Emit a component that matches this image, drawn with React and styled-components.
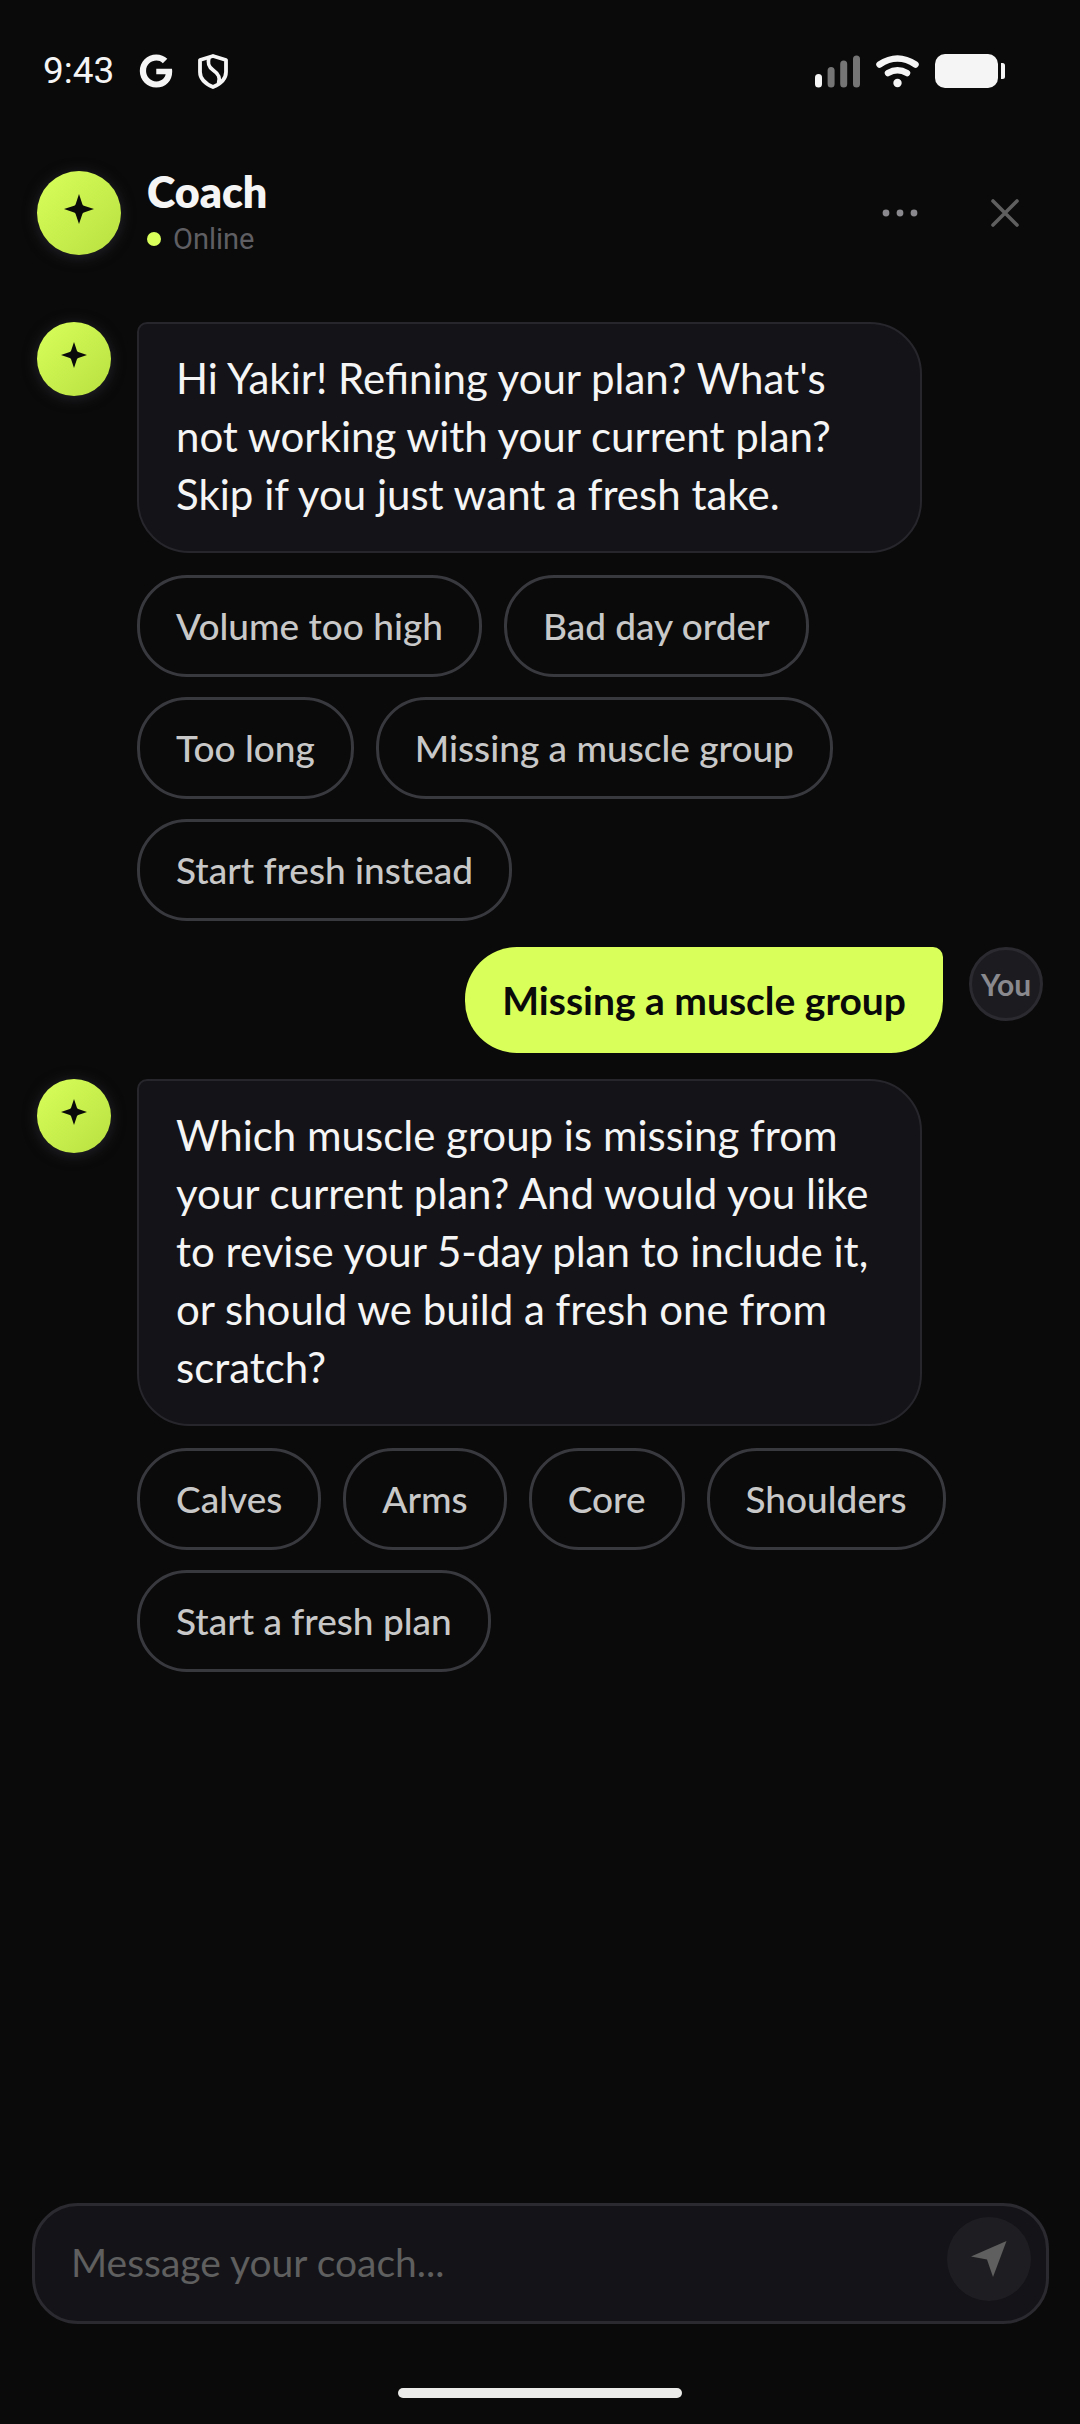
import React, { useState } from "react";
import styled, { createGlobalStyle } from "styled-components";
import { FaGoogle } from "react-icons/fa";

const GlobalStyle = createGlobalStyle`
  * {
    box-sizing: border-box;
  }
  body {
    margin: 0;
    background: #0a0a0a;
  }
  button, input {
    font-family: inherit;
  }
`;

const Screen = styled.div`
  display: flex;
  flex-direction: column;
  min-height: 100vh;
  background: #0a0a0a;
  color: #f5f5f5;
  font-family: Lato, "Noto Sans", sans-serif;
`;

const StatusBar = styled.div`
  display: flex;
  align-items: center;
  justify-content: space-between;
  height: 142px;
  padding: 0 75px 0 43px;
`;

const StatusGroup = styled.div`
  display: flex;
  align-items: center;
  gap: ${(props) => props.$gap}px;
`;

const Clock = styled.span`
  font-family: Roboto, sans-serif;
  font-size: 37px;
  line-height: 42px;
`;

const Header = styled.header`
  display: flex;
  align-items: center;
  gap: 26px;
  padding: 24px 33px 21px 37px;
`;

const Avatar = styled.div`
  display: flex;
  flex: none;
  align-items: center;
  justify-content: center;
  width: ${(props) => props.$size}px;
  height: ${(props) => props.$size}px;
  padding-bottom: 8px;
  border-radius: 50%;
  background: linear-gradient(135deg, #d8ff5a, #b8e040);
  box-shadow: 0 2px 14px #26262e;
`;

const UserAvatar = styled(Avatar)`
  padding: 0;
  border: 3px solid #2a2a30;
  background: #1c1c20;
  box-shadow: none;
  color: #8a8a8e;
  font-size: 30px;
  font-weight: 700;
`;

const Title = styled.div`
  flex: 1;
`;

const Name = styled.h1`
  margin: 0;
  font-size: 43px;
  font-weight: 800;
  line-height: 52px;
`;

const Presence = styled.div`
  display: flex;
  align-items: center;
  gap: 12px;
  color: #5f5f63;
  font-family: Roboto, sans-serif;
  font-size: 29px;
  line-height: 42px;
`;

const Dot = styled.span`
  width: 14px;
  height: 14px;
  border-radius: 50%;
  background: #d8ff5a;
`;

const Actions = styled.div`
  display: flex;
  gap: 21px;
`;

const IconButton = styled.button`
  display: flex;
  flex: none;
  align-items: center;
  justify-content: center;
  width: 84px;
  height: 84px;
  padding: 0;
  border: none;
  border-radius: 50%;
  background: ${(props) => props.$bg || "transparent"};
  color: ${(props) => props.$color || "#5f5f5f"};
`;

const Messages = styled.main`
  display: flex;
  flex: 1;
  flex-direction: column;
  gap: 26px;
  padding: 41px 37px;
`;

const Turn = styled.div`
  display: flex;
  flex-direction: column;
  gap: 22px;
`;

const Row = styled.div`
  display: flex;
  align-items: flex-start;
  justify-content: ${(props) => (props.$mine ? "flex-end" : "flex-start")};
  gap: 26px;
`;

const Bubble = styled.p`
  max-width: 78%;
  margin: 0;
  padding: 25px 37px 28px;
  border: 2px solid #26262c;
  border-radius: 10px 52px 52px 52px;
  background: #141418;
  font-size: 42px;
  line-height: 58px;
`;

const UserBubble = styled(Bubble)`
  padding: 24px 37px;
  border: none;
  border-radius: 52px 10px 52px 52px;
  background: #d8ff5a;
  color: #0a0a0a;
  font-size: 39px;
  font-weight: 700;
`;

const Chips = styled.div`
  display: flex;
  flex-wrap: wrap;
  gap: 20px 22px;
  padding: 0 70px 0 100px;
`;

const Chip = styled.button`
  height: 102px;
  padding: 0 36px 2px;
  border: 3px solid #38383f;
  border-radius: 50px;
  background: transparent;
  color: #c8c8c8;
  font-size: 37px;
  font-weight: 500;
`;

const Composer = styled.form`
  display: flex;
  align-items: flex-start;
  margin: 0 31px 0 32px;
  padding: 11px 15px 14px 36px;
  border: 3px solid #2a2a30;
  border-radius: 46px;
  background: #141418;
`;

const MessageInput = styled.input`
  flex: 1;
  min-width: 0;
  height: 90px;
  padding: 0;
  border: none;
  outline: none;
  background: transparent;
  color: #f5f5f5;
  font-size: 39px;
  &::placeholder {
    color: #5f5f5f;
    opacity: 1;
  }
`;

const HomeIndicator = styled.div`
  align-self: center;
  width: 284px;
  height: 10px;
  margin: 64px 0 26px;
  border-radius: 5px;
  background: #ebebe9;
`;

const ShieldIcon = () => (
  <svg width="30" height="35" viewBox="0 0 30 35" fill="none" stroke="#f5f5f5" strokeWidth="3.800" strokeLinejoin="round">
    <path d="M15 2 28 6v12c0 7-6 12-13 15C8 30 2 25 2 18V6z" />
    <path d="M11 3.500C9.500 9 10 12.500 15 16s8 7 5.500 13.500" />
  </svg>
);

const SignalIcon = () => (
  <svg width="45" height="34" viewBox="0 0 45 34">
    <rect x="0" y="20" width="7" height="13.500" rx="3.500" fill="#f5f5f5" />
    <rect x="12.600" y="13" width="7" height="20.500" rx="3.500" fill="#757575" />
    <rect x="25.200" y="6.500" width="7" height="27" rx="3.500" fill="#757575" />
    <rect x="38" y="1.500" width="7" height="32" rx="3.500" fill="#757575" />
  </svg>
);

const WifiIcon = () => (
  <svg width="43" height="34" viewBox="0 0 43 34" fill="none" stroke="#f5f5f5" strokeWidth="6.500" strokeLinecap="round">
    <path d="M3.500 10.500q18-12 36 0" />
    <path d="M12 19q9.500-5.500 19 0" />
    <circle cx="21.500" cy="29" r="4.200" fill="#f5f5f5" stroke="none" />
  </svg>
);

const BatteryIcon = () => (
  <svg width="70" height="34" viewBox="0 0 70 34" fill="#f5f5f5">
    <rect width="63" height="34" rx="10" />
    <path d="M66 9h1.500a2.500 2.500 0 0 1 2.500 2.500v11a2.500 2.500 0 0 1-2.500 2.500H66z" />
  </svg>
);

const Sparkle = ({ size }) => (
  <svg width={size} height={size} viewBox="0 0 32 32" fill="#0a0a0a">
    <path d="M16 0l3.600 10.800q.4 1.200 1.600 1.600L32 16l-10.800 3.600q-1.200.4-1.600 1.600L16 32l-3.600-10.800q-.4-1.200-1.600-1.600L0 16l10.800-3.600q1.200-.4 1.600-1.600z" />
  </svg>
);

const MoreIcon = () => (
  <svg width="36" height="8" viewBox="0 0 36 8" fill="currentColor">
    <circle cx="4" cy="4" r="3.400" />
    <circle cx="18" cy="4" r="3.400" />
    <circle cx="32" cy="4" r="3.400" />
  </svg>
);

const CloseIcon = () => (
  <svg width="28" height="28" viewBox="0 0 28 28" stroke="currentColor" strokeWidth="3.600" strokeLinecap="round">
    <path d="M2 2l24 24M26 2L2 26" />
  </svg>
);

const SendIcon = () => (
  <svg width="36" height="36" viewBox="0 0 36 36" fill="currentColor">
    <path d="M35.500 0L22 36l-6-17.500L0 15.500z" />
  </svg>
);

const thread = [
  {
    id: 1,
    from: "coach",
    text: "Hi Yakir! Refining your plan? What's not working with your current plan? Skip if you just want a fresh take.",
    options: [
      "Volume too high",
      "Bad day order",
      "Too long",
      "Missing a muscle group",
      "Start fresh instead",
    ],
  },
  { id: 2, from: "user", text: "Missing a muscle group" },
  {
    id: 3,
    from: "coach",
    text: "Which muscle group is missing from your current plan? And would you like to revise your 5-day plan to include it, or should we build a fresh one from scratch?",
    options: ["Calves", "Arms", "Core", "Shoulders", "Start a fresh plan"],
  },
];

const App = () => {
  const [messages, setMessages] = useState(thread);
  const [body, setBody] = useState("");

  const send = (text) => {
    if (!text.trim()) return;
    setMessages([...messages, { id: messages.length + 1, from: "user", text }]);
    setBody("");
  };

  const handleSubmit = (e) => {
    e.preventDefault();
    send(body);
  };

  return (
    <Screen>
      <GlobalStyle />
      <StatusBar>
        <StatusGroup $gap={25}>
          <Clock>9:43</Clock>
          <FaGoogle size={34} color="#f5f5f5" />
          <ShieldIcon />
        </StatusGroup>
        <StatusGroup $gap={16}>
          <SignalIcon />
          <WifiIcon />
          <BatteryIcon />
        </StatusGroup>
      </StatusBar>
      <Header>
        <Avatar $size={84}>
          <Sparkle size={30} />
        </Avatar>
        <Title>
          <Name>Coach</Name>
          <Presence>
            <Dot />
            Online
          </Presence>
        </Title>
        <Actions>
          <IconButton type="button" aria-label="More" $color="#8a8a8e">
            <MoreIcon />
          </IconButton>
          <IconButton type="button" aria-label="Close">
            <CloseIcon />
          </IconButton>
        </Actions>
      </Header>
      <Messages>
        {messages.map(({ id, from, text, options }) =>
          from === "user" ? (
            <Row key={id} $mine>
              <UserBubble>{text}</UserBubble>
              <UserAvatar $size={74}>You</UserAvatar>
            </Row>
          ) : (
            <Turn key={id}>
              <Row>
                <Avatar $size={74}>
                  <Sparkle size={26} />
                </Avatar>
                <Bubble>{text}</Bubble>
              </Row>
              <Chips>
                {options.map((option) => (
                  <Chip key={option} type="button" onClick={() => send(option)}>
                    {option}
                  </Chip>
                ))}
              </Chips>
            </Turn>
          )
        )}
      </Messages>
      <Composer onSubmit={handleSubmit}>
        <MessageInput
          aria-label="Message your coach"
          placeholder="Message your coach..."
          value={body}
          onChange={(e) => setBody(e.target.value)}
        />
        <IconButton type="submit" aria-label="Send" $bg="#1e1e22">
          <SendIcon />
        </IconButton>
      </Composer>
      <HomeIndicator />
    </Screen>
  );
};

export default App;
